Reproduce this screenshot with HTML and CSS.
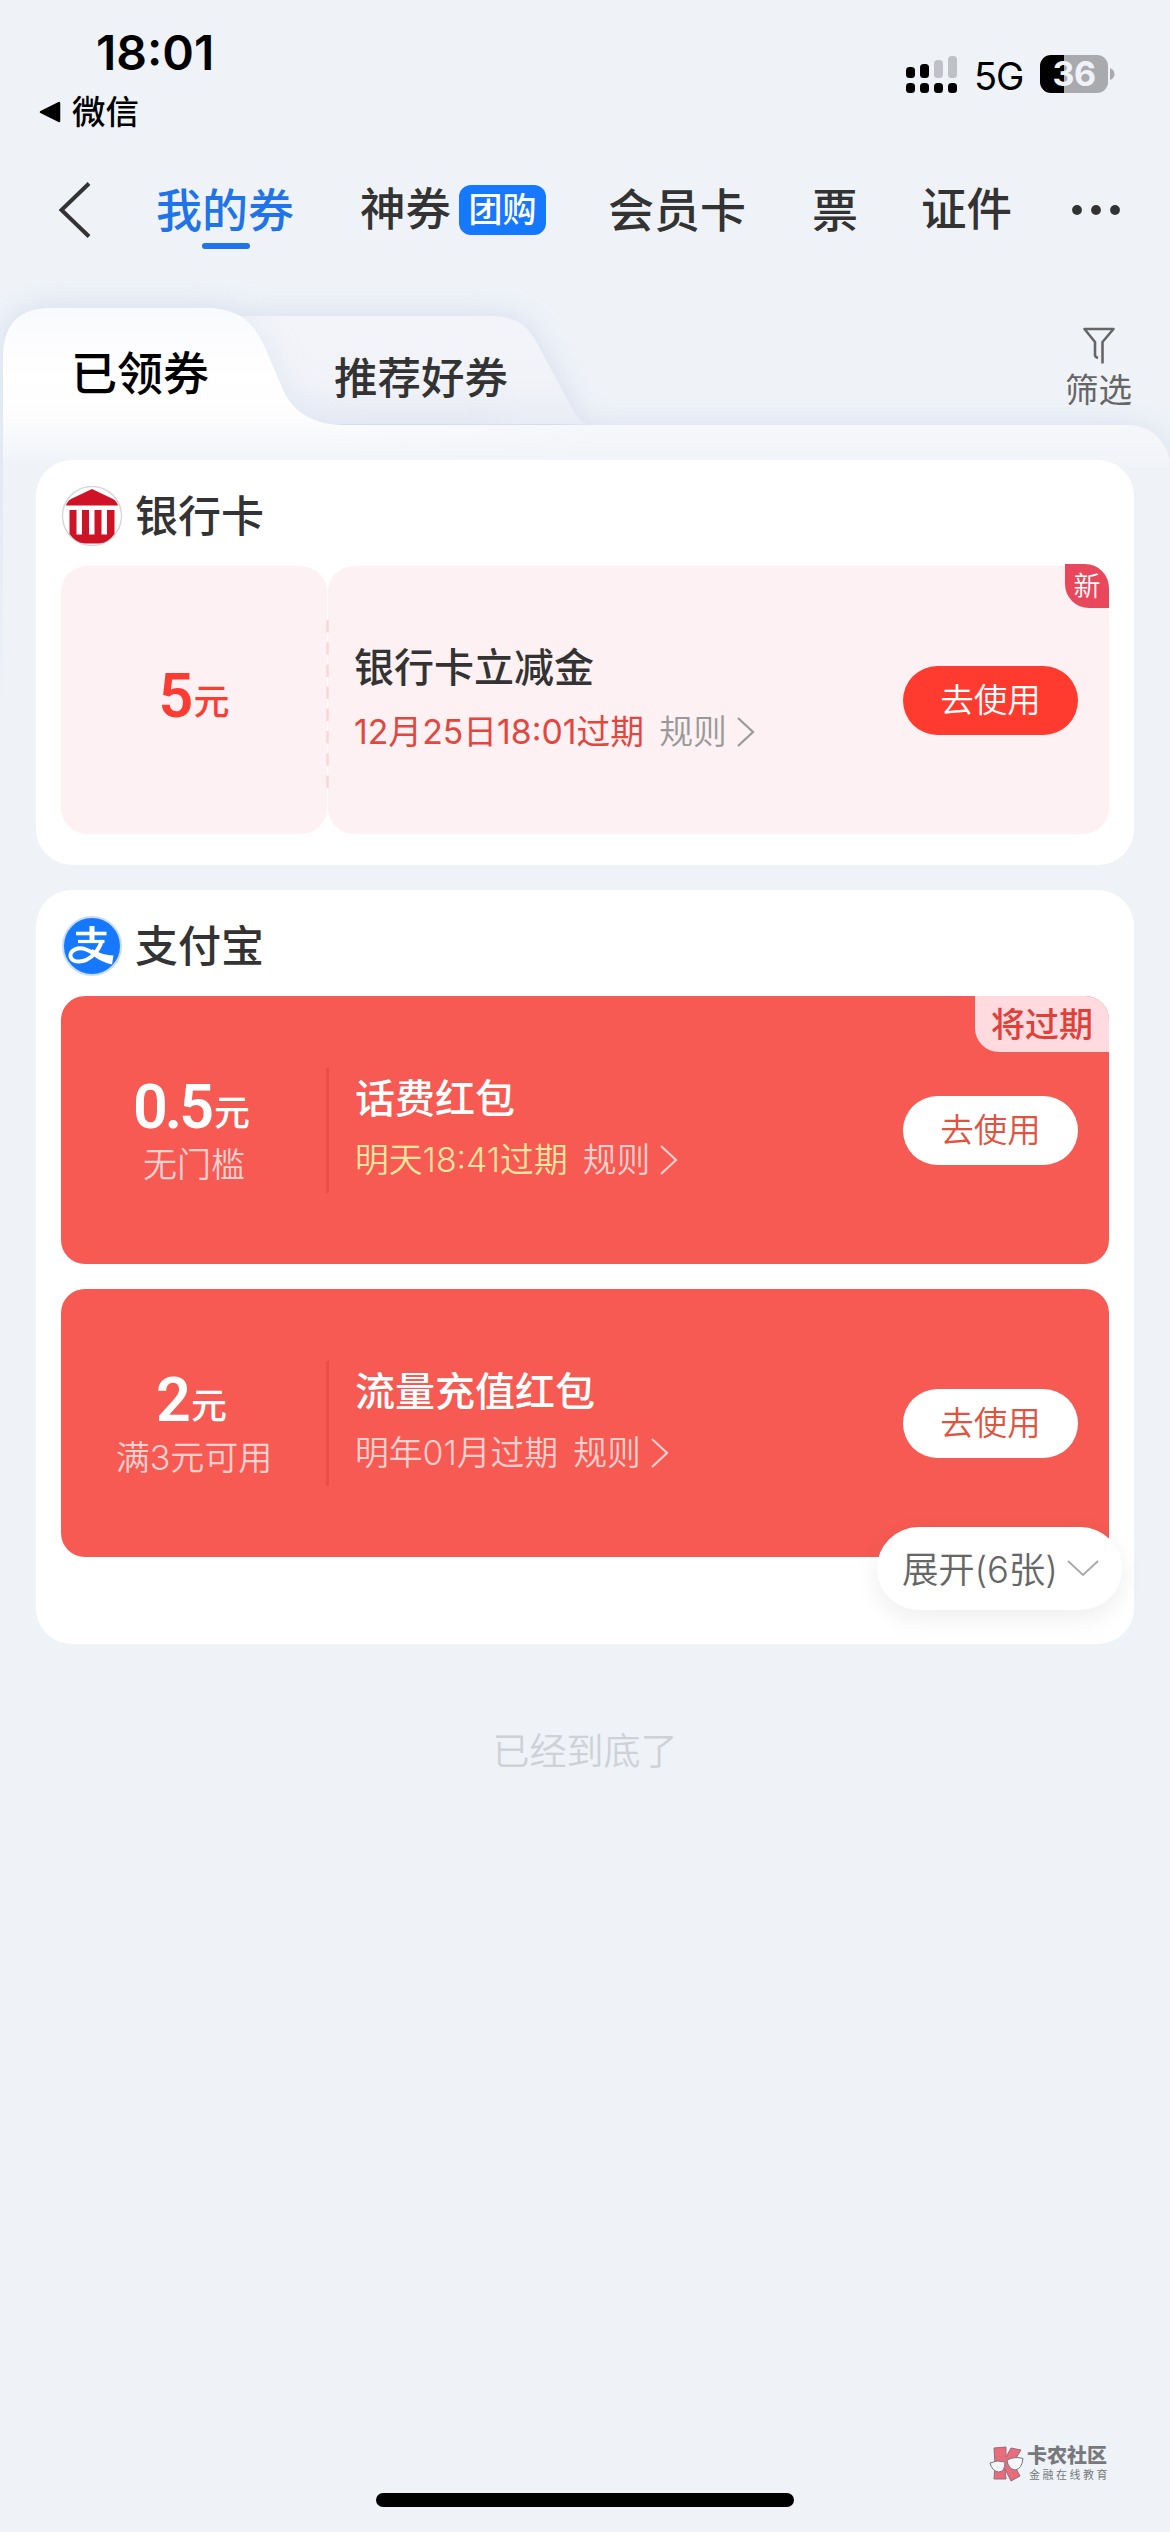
FILE: index.html
```html
<!DOCTYPE html>
<html lang="zh-CN">
<head>
<meta charset="utf-8">
<title>我的券</title>
<link rel="stylesheet" href="styles.css">
</head>
<body>
<div class="screen">
  <header class="status">
    <div class="status-left">
      <div class="clock">18:01</div>
      <div class="back-app">
        <svg width="22" height="22" viewBox="0 0 22 22"><path d="M2 11 L20 2 V20 Z" fill="#000" stroke="#000" stroke-width="2.5" stroke-linejoin="round"/></svg>
        <span>微信</span>
      </div>
    </div>
    <div class="status-right">
      <svg class="signal" width="52" height="38" viewBox="0 0 52 38">
        <g fill="#000">
          <rect x="0" y="12" width="9" height="11" rx="3.5"/><rect x="14" y="9" width="9" height="14" rx="3.5"/>
          <rect x="0" y="28" width="9" height="10" rx="3.5"/><rect x="14" y="28" width="9" height="10" rx="3.5"/>
          <rect x="28" y="28" width="9" height="10" rx="3.5"/><rect x="42" y="28" width="9" height="10" rx="3.5"/>
        </g>
        <g fill="#bfc1c6"><rect x="28" y="5" width="9" height="18" rx="3.5"/><rect x="42" y="1" width="9" height="22" rx="3.5"/></g>
      </svg>
      <span class="network">5G</span>
      <div class="battery"><span>36</span></div>
      <svg class="nub" width="5" height="12" viewBox="0 0 5 12"><path d="M0 0 Q4.5 2 4.5 6 T0 12 Z" fill="#a9aaae"/></svg>
    </div>
  </header>

  <nav class="nav">
    <svg class="nav-back" width="36" height="56" viewBox="0 0 36 56"><path d="M33 1.500 L5.500 28 L33 54.500" fill="none" stroke="#333" stroke-width="4"/></svg>
    <span class="nav-item active">我的券</span>
    <span class="nav-item n2">神券</span>
    <span class="nav-badge">团购</span>
    <span class="nav-item n3">会员卡</span>
    <span class="nav-item n4">票</span>
    <span class="nav-item n5">证件</span>
    <svg class="nav-more" width="50" height="12" viewBox="0 0 50 12"><g fill="#333"><circle cx="6" cy="6" r="4.900"/><circle cx="25" cy="6" r="4.900"/><circle cx="44" cy="6" r="4.900"/></g></svg>
  </nav>

  <section class="tabs">
    <svg class="tabs-bg" width="1170" height="460" viewBox="0 260 1170 460">
      <defs>
        <linearGradient id="front" gradientUnits="userSpaceOnUse" x1="0" y1="308" x2="0" y2="466">
          <stop offset="0" stop-color="#f9fafd"/><stop offset=".45" stop-color="#fff"/><stop offset=".68" stop-color="#fdfdfe"/><stop offset="1" stop-color="#eff3f8"/>
        </linearGradient>
        <linearGradient id="strip" gradientUnits="userSpaceOnUse" x1="300" y1="0" x2="620" y2="0">
          <stop offset="0" stop-color="#f3f5f9" stop-opacity="0"/><stop offset="1" stop-color="#f2f4f8" stop-opacity=".6"/>
        </linearGradient>
        <linearGradient id="rear" gradientUnits="userSpaceOnUse" x1="0" y1="316" x2="0" y2="424">
          <stop offset="0" stop-color="#f2f4f9"/><stop offset=".6" stop-color="#f1f3f8"/><stop offset="1" stop-color="#e9ecf5"/>
        </linearGradient>
        <linearGradient id="fade" gradientUnits="userSpaceOnUse" x1="0" y1="424" x2="0" y2="700">
          <stop offset="0" stop-color="#fff"/><stop offset=".25" stop-color="#fff"/><stop offset="1" stop-color="#fff" stop-opacity="0"/>
        </linearGradient>
        <mask id="m"><rect x="-20" y="200" width="1210" height="500" fill="url(#fade)"/></mask>
        <filter id="blur" x="-10%" y="-20%" width="120%" height="140%"><feGaussianBlur stdDeviation="15"/></filter>
        <clipPath id="rearClip"><path d="M240 316 H488 C512 316 526 322 537 343 L573 410 Q579 420 586 424 H240 Z"/></clipPath>
      </defs>
      <g mask="url(#m)">
        <path filter="url(#blur)" fill="#d0d8ec" opacity=".85" d="M3 700 V352 Q6 308 50 308 H212 Q228 308 240 316 H488 C512 316 526 322 537 343 L573 410 Q579 420 586 428 H1130 Q1160 430 1169 462 V700 Z"/>
      </g>
      <path d="M240 316 H488 C512 316 526 322 537 343 L573 410 Q579 420 586 424 H240 Z" fill="url(#rear)"/>
      <g clip-path="url(#rearClip)">
        <path filter="url(#blur)" fill="#dde3f0" opacity=".7" d="M3 470 V308 H205 C245 308 257 330 266 352 L288 398 Q302 424 345 424 H500 V470 Z"/>
      </g>
      <path fill="url(#front)" d="M3 470 V352 Q6 308 50 308 H205 C245 308 256 328 266 350 L284 392 Q300 424 342 425 H1130 Q1160 427 1170 459 V470 Z"/>
      <path fill="url(#strip)" d="M300 425 H1130 Q1160 427 1170 459 V470 H300 Z"/>
      <rect x="3" y="466" width="1167" height="254" fill="#eff3f8"/>
    </svg>
    <span class="tab current">已领券</span>
    <span class="tab other">推荐好券</span>
    <div class="filter">
      <svg width="36" height="40" viewBox="0 0 36 40"><path d="M21.500 37.500 V16 L32.500 3 H3.500 L14 16 V29 Q14 31 17 32" fill="none" stroke="#666" stroke-width="2.600" stroke-linejoin="round"/></svg>
      <span>筛选</span>
    </div>
  </section>

  <main class="list">
    <section class="card bank">
      <h2 class="card-head">
        <svg width="62" height="62" viewBox="0 0 62 62">
          <circle cx="31" cy="31" r="29.500" fill="#fff" stroke="#d9d9dd" stroke-width="1.500"/>
          <path fill="#cf1225" d="M31 4 L52 14 Q56 16.500 57 20.500 H5 Q6 16.500 10 14 Z"/>
          <path fill="#cf1225" d="M8.500 25 H15.500 V49.500 H21 V25 H28 V49.500 H33.500 V25 H40.500 V49.500 H46 V25 H53.500 V49 Q47 58 38 58.500 H24 Q15 58 8.500 49 Z"/>
        </svg>
        <span>银行卡</span>
      </h2>
      <article class="coupon pink">
        <div class="amount"><div class="money"><b>5</b><i>元</i></div></div>
        <div class="detail">
          <div class="info">
            <div class="title">银行卡立减金</div>
            <div class="meta"><span class="date">12月25日18:01过期</span><span class="rule">规则</span><svg width="20" height="32" viewBox="0 0 20 32"><path d="M2 2 L17 16 L2 30" fill="none" stroke="currentColor" stroke-width="2.200"/></svg></div>
          </div>
          <span class="use">去使用</span>
        </div>
        <svg class="dash" width="3" height="170" viewBox="0 0 3 170"><path d="M1.500 0 V170" stroke="#f9d6dc" stroke-width="2.500" stroke-dasharray="12.500 9.700"/></svg>
        <span class="tag-new">新</span>
      </article>
    </section>

    <section class="card alipay">
      <h2 class="card-head">
        <svg width="62" height="62" viewBox="0 0 62 62">
          <circle cx="31" cy="31" r="29" fill="#1677ff" stroke="#c9dcfa" stroke-width="2"/>
          <g fill="none" stroke="#fff">
            <path d="M15 18.500 H45.500" stroke-width="3.600"/>
            <path d="M31 11 V27" stroke-width="5"/>
            <path d="M17 26.500 H43.500" stroke-width="3.200"/>
            <path d="M41 25.500 C37.500 36 29 46.500 18 46.500 C9 46.500 8 40 11 36.500 C17 30.500 26 34 33 38.500" stroke-width="4"/>
          </g>
          <path fill="#fff" d="M31 34 Q42 40.500 52.500 40.500 L51 49.500 Q42 48 31 40 Z"/>
        </svg>
        <span>支付宝</span>
      </h2>
      <article class="coupon red">
        <div class="amount"><div class="money"><b>0.5</b><i>元</i></div><div class="limit">无门槛</div></div>
        <div class="detail">
          <div class="info">
            <div class="title">话费红包</div>
            <div class="meta"><span class="date soon">明天18:41过期</span><span class="rule">规则</span><svg width="20" height="32" viewBox="0 0 20 32"><path d="M2 2 L17 16 L2 30" fill="none" stroke="currentColor" stroke-width="2.200"/></svg></div>
          </div>
          <span class="use">去使用</span>
        </div>
        <span class="tag-soon">将过期</span>
      </article>
      <article class="coupon red second">
        <div class="amount"><div class="money"><b>2</b><i>元</i></div><div class="limit">满3元可用</div></div>
        <div class="detail">
          <div class="info">
            <div class="title">流量充值红包</div>
            <div class="meta"><span class="date">明年01月过期</span><span class="rule">规则</span><svg width="20" height="32" viewBox="0 0 20 32"><path d="M2 2 L17 16 L2 30" fill="none" stroke="currentColor" stroke-width="2.200"/></svg></div>
          </div>
          <span class="use">去使用</span>
        </div>
      </article>
      <div class="expand"><span>展开(6张)</span><svg width="34" height="20" viewBox="0 0 34 20"><path d="M2 2 L17 16 L32 2" fill="none" stroke="#aaa" stroke-width="2"/></svg></div>
    </section>
    <p class="end">已经到底了</p>
  </main>

  <footer class="bottom">
    <div class="community">
      <svg width="36" height="38" viewBox="0 0 36 38">
        <path d="M5 4 L17 3 L17 13 L22 4 L32 6 L24 19 L31 32 L22 37 L16 25 L17 35 L5 35 L6 20 Z" fill="#e96b7c" stroke="#8d7176" stroke-width="1"/>
        <path d="M1 19 Q8 15.500 16 18 Q16 28 9.500 28 Q3 27 1 19 Z M18 16 Q26 12 34 14.500 Q33 25 26 26 Q19 25 18 16 Z" fill="#f4f6fa" stroke="#77787c" stroke-width="1"/>
      </svg>
      <div class="community-text"><strong>卡农社区</strong><small>金融在线教育</small></div>
    </div>
    <div class="home-bar"></div>
  </footer>
</div>
</body>
</html>
```
FILE: styles.css
```css
* { box-sizing: border-box; margin: 0; padding: 0; }
body {
  width: 1170px;
  background: #eff3f8;
  color: #333;
  font-family: Inter, "Noto Sans CJK SC", sans-serif;
}
svg { display: block; flex: none; }
.screen { display: flex; flex-direction: column; width: 1170px; height: 2532px; overflow: hidden; background: #eff3f8; }
span, .title, .limit, .clock { white-space: nowrap; }

/* status bar */
.status { display: flex; justify-content: space-between; height: 160px; color: #000; }
.clock { margin: 25px 0 0 96px; font-size: 48px; line-height: 56px; font-weight: 600; }
.back-app { display: flex; align-items: center; gap: 11px; margin: 7px 0 0 39px; font-size: 33.500px; line-height: 48px; font-weight: 500; }
.status-right { display: flex; align-items: center; height: 38px; margin: 55px 55px 0 0; }
.network { margin-left: 16px; width: 50px; padding-top: 3px; font-size: 38px; line-height: 38px; letter-spacing: -1px; }
.battery { width: 68px; height: 38px; margin-left: 16px; border-radius: 11px; background: linear-gradient(90deg, #000 24px, #a9aaae 24px); color: #eff3f8; font-size: 34px; line-height: 38px; font-weight: 700; text-align: center; letter-spacing: -.5px; }
.nub { margin-left: 2px; }

/* top navigation */
.nav { display: flex; align-items: center; height: 100px; padding-left: 56px; font-size: 46px; font-weight: 500; }
.nav-item { line-height: 60px; }
.active { position: relative; margin-left: 64px; color: #1f74e8; }
.active::after { content: ""; position: absolute; left: 46px; top: 63px; width: 48px; height: 6px; border-radius: 3px; background: #1f74e8; }
.n2 { margin-left: 66px; font-size: 45.500px; }
.nav-badge { width: 87px; height: 50px; margin-left: 8px; border-radius: 12px; background: #1677ff; color: #fff; font-size: 34px; line-height: 50px; text-align: center; }
.n3 { margin-left: 62px; }
.n4 { margin-left: 66px; }
.n5 { margin-left: 63px; font-size: 45.500px; }
.nav-more { margin-left: 59px; }

/* folder tabs */
.tabs { position: relative; display: flex; height: 200px; }
.tabs-bg { position: absolute; left: 0; top: 0; }
.tab { position: relative; line-height: 60px; font-weight: 500; }
.current { margin: 83px 0 0 71px; color: #000; font-size: 46px; }
.other { margin: 88px 0 0 125px; font-size: 43.500px; }
.filter { position: relative; display: flex; flex-direction: column; align-items: center; margin: 66px 38px 0 auto; color: #666; font-size: 33.500px; line-height: 48px; }

/* cards */
.list { position: relative; display: flex; flex-direction: column; padding: 0 36px; }
.card { border-radius: 36px; background: #fff; padding: 0 25px; }
.bank { height: 405px; }
.alipay { position: relative; height: 754px; margin-top: 25px; }
.card-head { display: flex; align-items: center; gap: 12px; height: 106px; padding-top: 5px; font-size: 43px; font-weight: 500; line-height: 60px; }
.coupon { position: relative; display: flex; height: 268px; }
.amount { display: flex; flex-direction: column; align-items: center; width: 266px; padding-top: 79px; }
.detail { display: flex; flex: 1; padding-left: 28px; }
.money { display: flex; align-items: baseline; height: 64px; line-height: 64px; }
.money b { font: 600 61px/64px Roboto, sans-serif; letter-spacing: -3px; }
.money i { margin-left: 3px; font-size: 36px; line-height: 60px; font-style: normal; font-weight: 500; transform: translateY(-2px); }
.limit { margin-top: 4px; font-size: 34px; line-height: 44px; font-weight: 350; }
.info { flex: 1; padding-top: 78px; }
.title { font-size: 40px; line-height: 50px; font-weight: 500; }
.meta { display: flex; align-items: center; margin-top: 14px; font-size: 33.800px; line-height: 44px; font-weight: 350; }
.rule { margin: 0 9px 0 15px; }
.use { width: 175px; height: 69px; margin: 100px 31px 0 0; border-radius: 35px; font-size: 33.500px; line-height: 69px; font-weight: 350; text-align: center; }

.pink .amount, .pink .detail { border-radius: 26px; background: #fef1f3; }
.pink .amount { padding-top: 98px; }
.pink .detail { margin-left: 1px; padding-left: 26px; }
.pink .info { padding-top: 77px; }
.pink .money { color: #fa3c33; }
.pink .date { color: #e0483f; font-weight: 400; }
.pink .meta { margin-top: 17px; color: #999; }
.pink .use { background: #ff3b30; color: #fff; }
.dash { position: absolute; left: 265px; top: 54px; }
.tag-new { position: absolute; right: 0; top: -2px; width: 44px; height: 44px; border-radius: 0 24px 0 24px; background: #e9485c; color: #fff; font-size: 27px; line-height: 45px; font-weight: 350; text-align: center; }

.red { border-radius: 24px; background: #f65a52; color: #fff; overflow: hidden; }
.red::after { content: ""; position: absolute; left: 265px; top: 72px; width: 3px; height: 125px; background: #eb4e47; }
.red .money { padding-right: 5px; }
.red .limit, .red .meta { color: #ffd0ce; }
.red .soon { color: #ffe6a0; }
.red .use { background: #fff; color: #e0533f; }
.second { margin-top: 25px; border-bottom-right-radius: 0; }
.tag-soon { position: absolute; right: 0; top: 0; width: 134px; height: 56px; border-radius: 0 0 0 24px; background: #ffdbdf; color: #e04038; font-size: 34px; line-height: 57px; font-weight: 500; text-align: center; }
.expand { position: absolute; left: 841px; top: 637px; display: flex; align-items: center; width: 245px; height: 83px; padding-left: 25px; border-radius: 42px; background: #fff; box-shadow: 0 8px 26px rgba(0, 0, 0, .07); color: #666; font-size: 36.500px; font-weight: 350; letter-spacing: -.2px; }
.expand span { padding-bottom: 3px; }
.expand svg { margin-left: 8px; }
.end { margin-top: 83px; color: #ced1d5; font-size: 37px; line-height: 50px; text-align: center; font-weight: 350; }

/* bottom */
.bottom { display: flex; flex-direction: column; margin-top: auto; height: 92px; }
.community { display: flex; align-items: flex-start; gap: 2px; height: 39px; margin: 4px 0 0 989px; color: #77797d; }
.community-text { display: flex; flex-direction: column; }
.community strong { font-size: 20px; line-height: 24px; font-weight: 900; }
.community small { margin: -1px 0 0 2px; font-size: 11px; line-height: 16px; letter-spacing: 2.500px; white-space: nowrap; }
.home-bar { width: 418px; height: 14px; margin: 10px auto 0; border-radius: 7px; background: #000; }
```
